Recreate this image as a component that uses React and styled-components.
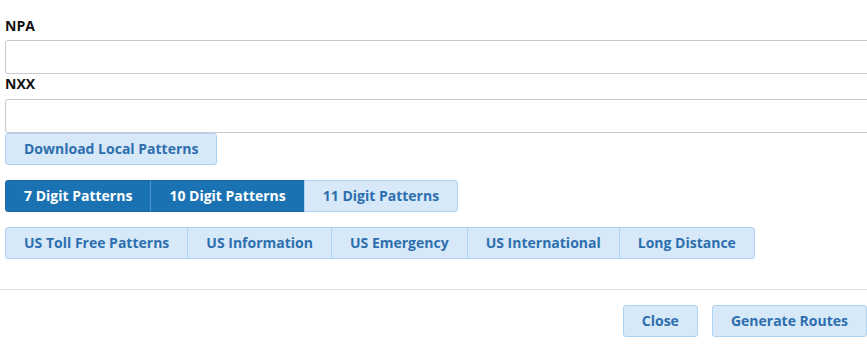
import React from "react";
import styled, { createGlobalStyle } from "styled-components";

const GlobalStyle = createGlobalStyle`
  body {
    margin: 0;
    background: #fff;
    font-family: "Open Sans", "Noto Sans", sans-serif;
    overflow: hidden;
  }
`;

const Dialog = styled.div`
  width: 867px;
  height: 352px;
  overflow: hidden;
  background: #fff;
`;

const Body = styled.div`
  padding: 16px 0 30px 5px;
`;

const Label = styled.label`
  display: block;
  font-size: 14px;
  font-weight: 700;
  line-height: 20px;
  color: #111;
  margin-bottom: ${(p) => p.$gap || 4}px;
`;

const Input = styled.input`
  display: block;
  box-sizing: border-box;
  width: 900px;
  height: 34px;
  margin: 0;
  padding: 4px 8px;
  border: 1px solid #c9c9c9;
  border-radius: 3px;
  font-family: inherit;
  font-size: 14px;
  background: #fff;
  outline: none;
`;

const Button = styled.button`
  box-sizing: border-box;
  height: 32px;
  padding: 0 18px;
  margin: 0;
  font-family: "Open Sans", "Noto Sans", sans-serif;
  font-size: 14px;
  font-weight: 700;
  line-height: 30px;
  white-space: nowrap;
  cursor: pointer;
  color: ${(p) => (p.$active ? "#fff" : "#2d6fae")};
  background: ${(p) => (p.$active ? "#1b72b3" : "#d7e9f8")};
  border: 1px solid ${(p) => (p.$active ? "#1a69a6" : "#acd3f1")};
  border-radius: 3px;
`;

const Group = styled.div`
  display: inline-flex;
  margin-top: 15px;

  & > ${Button} {
    border-radius: 0;
    margin-left: -1px;
  }
  & > ${Button}:first-child {
    margin-left: 0;
    border-top-left-radius: 3px;
    border-bottom-left-radius: 3px;
  }
  & > ${Button}:last-child {
    border-top-right-radius: 3px;
    border-bottom-right-radius: 3px;
  }
  & > ${Button}[data-active="true"] + ${Button}[data-active="true"] {
    border-left-color: #4b93cc;
  }
`;

const Row = styled.div`
  display: block;
`;

const Footer = styled.div`
  border-top: 1px solid #e3e3e3;
  display: flex;
  justify-content: flex-end;
  gap: 14px;
  padding: 15px 0 15px 0;
`;

const digitTabs = [
  { label: "7 Digit Patterns", active: true },
  { label: "10 Digit Patterns", active: true },
  { label: "11 Digit Patterns", active: false },
];

const usTabs = [
  "US Toll Free Patterns",
  "US Information",
  "US Emergency",
  "US International",
  "Long Distance",
];

export default function App() {
  return (
    <Dialog>
      <GlobalStyle />
      <Body>
        <Label htmlFor="npa">NPA</Label>
        <Input id="npa" type="text" />
        <Label htmlFor="nxx" $gap={5}>NXX</Label>
        <Input id="nxx" type="text" />
        <Button>Download Local Patterns</Button>
        <Row>
          <Group>
            {digitTabs.map((t) => (
              <Button key={t.label} $active={t.active} data-active={t.active}>
                {t.label}
              </Button>
            ))}
          </Group>
        </Row>
        <Row>
          <Group>
            {usTabs.map((t) => (
              <Button key={t}>{t}</Button>
            ))}
          </Group>
        </Row>
      </Body>
      <Footer>
        <Button>Close</Button>
        <Button>Generate Routes</Button>
      </Footer>
    </Dialog>
  );
}
